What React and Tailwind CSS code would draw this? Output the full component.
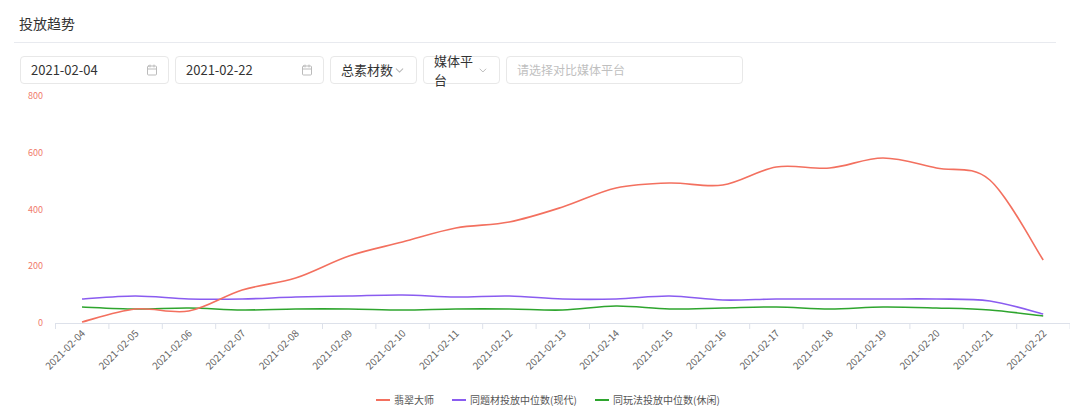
import React from "react";
import { Calendar, ChevronDown } from "lucide-react";

const dates = Array.from({ length: 19 }, (_, i) => `2021-02-${String(i + 4).padStart(2, "0")}`);

// pixel y values in chart coords (0 value at y=235 inside the svg)
const OFF = 88;
const red = [322, 309, 311, 290, 278, 256, 242, 228, 222, 207, 188, 183, 185, 167, 168, 158, 168, 180, 260];
const purple = [299, 296, 299, 299, 297, 296, 295, 297, 296, 299, 299, 296, 300, 299, 299, 299, 299, 301, 314];
const green = [307, 309, 308, 310, 309, 309, 310, 309, 309, 310, 306, 309, 308, 307, 309, 307, 308, 310, 316];

const px = (i) => 82 + i * 53.4;

const smooth = (ys) => {
  const pts = ys.map((y, i) => [px(i), y - OFF]);
  let d = `M${pts[0][0]},${pts[0][1]}`;
  for (let i = 0; i < pts.length - 1; i++) {
    const p0 = pts[i - 1] || pts[i];
    const p1 = pts[i];
    const p2 = pts[i + 1];
    const p3 = pts[i + 2] || p2;
    const c1 = [p1[0] + (p2[0] - p0[0]) / 6, p1[1] + (p2[1] - p0[1]) / 6];
    const c2 = [p2[0] - (p3[0] - p1[0]) / 6, p2[1] - (p3[1] - p1[1]) / 6];
    d += ` C${c1[0]},${c1[1]} ${c2[0]},${c2[1]} ${p2[0]},${p2[1]}`;
  }
  return d;
};

const Box = ({ w, children, className = "" }) => (
  <div className={`h-[28px] border border-[#e8e8e8] rounded-sm flex items-center justify-between px-2.5 text-[13px] ${w} ${className}`}>
    {children}
  </div>
);

export default function App() {
  const font = { fontFamily: '"Noto Sans CJK SC", "Noto Sans", sans-serif' };
  return (
    <div className="w-[1070px] h-[420px] bg-white overflow-hidden relative" style={font}>
      <div className="px-[14px]">
        <div className="pt-[13px] pb-[9px] pl-[5px] text-[14px] text-[#333] leading-5">投放趋势</div>
        <div className="h-px bg-[#e8eaef] w-[1042px]" />
      </div>
      <div className="flex gap-[6px] pl-[20px] mt-[13px] text-[#333]">
        <Box w="w-[149px]">
          <span className="text-[13px]">2021-02-04</span>
          <Calendar size={12} className="text-[#bbb]" />
        </Box>
        <Box w="w-[149px]">
          <span>2021-02-22</span>
          <Calendar size={12} className="text-[#bbb]" />
        </Box>
        <Box w="w-[87px]">
          <span>总素材数</span>
          <ChevronDown size={13} className="text-[#bbb]" />
        </Box>
        <Box w="w-[77px]">
          <span>媒体平台</span>
          <ChevronDown size={13} className="text-[#bbb] -ml-1" />
        </Box>
        <Box w="w-[237px]">
          <span className="text-[#bfbfbf] text-[12px]">请选择对比媒体平台</span>
        </Box>
      </div>
      <svg width="1070" height="332" className="absolute left-0 top-[88px]">
        {[0, 200, 400, 600, 800].map((v) => (
          <text key={v} x="43" y={235 - v * 0.28375 + 3} textAnchor="end" fontSize="9" fill="#f07c6c">
            {v}
          </text>
        ))}
        <line x1="55" y1="235.5" x2="1070" y2="235.5" stroke="#dde1ea" />
        {Array.from({ length: 20 }, (_, i) => (
          <line key={i} x1={55.5 + i * 53.4} y1="235" x2={55.5 + i * 53.4} y2="241" stroke="#dde1ea" />
        ))}
        {dates.map((d, i) => (
          <text
            key={d}
            x={px(i) + 4}
            y="246"
            textAnchor="end"
            fontSize="10"
            fill="#666"
            transform={`rotate(-45 ${px(i) + 4} 246)`}
          >
            {d}
          </text>
        ))}
        <path d={smooth(green)} fill="none" stroke="#2ea52e" strokeWidth="1.6" />
        <path d={smooth(purple)} fill="none" stroke="#8a5cf0" strokeWidth="1.6" />
        <path d={smooth(red)} fill="none" stroke="#f3705f" strokeWidth="1.6" />
        <g fontSize="10" fill="#555">
          <line x1="376" y1="312" x2="390" y2="312" stroke="#f3705f" strokeWidth="2" />
          <text x="394" y="315.5">翡翠大师</text>
          <line x1="452" y1="312" x2="466" y2="312" stroke="#8a5cf0" strokeWidth="2" />
          <text x="470" y="315.5">同题材投放中位数(现代)</text>
          <line x1="595" y1="312" x2="609" y2="312" stroke="#2ea52e" strokeWidth="2" />
          <text x="613" y="315.5">同玩法投放中位数(休闲)</text>
        </g>
      </svg>
    </div>
  );
}
